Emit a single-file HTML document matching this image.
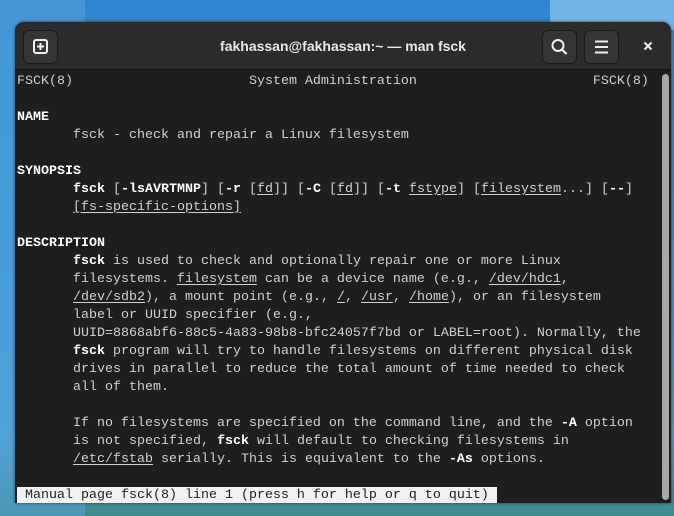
<!DOCTYPE html>
<html><head><meta charset="utf-8">
<style>
html,body{margin:0;padding:0;width:674px;height:516px;overflow:hidden;}
body{background:linear-gradient(180deg,#2f86cf 0%,#3d93d6 60%,#4a9ad2 85%,#3f8a8e 100%);position:relative;font-family:"Liberation Sans",sans-serif;}
.bgl{position:absolute;left:0;top:0;width:85px;height:516px;background:#5aa6dc;opacity:.5}
.bgr{position:absolute;left:550px;top:0;width:124px;height:30px;background:#6fb6e6}
.win{position:absolute;left:15px;top:22px;width:656px;height:481px;background:#1e1e1e;border-radius:9px 9px 0 0;overflow:hidden;box-shadow:0 0 3px rgba(0,0,0,.6)}
.hdr{position:absolute;left:0;top:0;width:656px;height:47px;background:#2b2b2b;border-bottom:1px solid #111}
.btn{position:absolute;top:8px;width:33px;height:32px;background:#353535;border-radius:6px;border:1px solid #1a1a1a}
.title{position:absolute;left:0;width:656px;top:16px;text-align:center;color:#e8e8e8;font-weight:bold;font-size:14px;}
.term{position:absolute;left:2px;top:51px;font-family:"Liberation Mono",monospace;font-size:13.33px;line-height:18px;color:#d0d0d0;white-space:pre;}
b{color:#fff}
u{text-decoration:underline;text-underline-offset:2px}
.status{background:#f2f2f2;color:#1e1e1e;display:inline-block;padding-right:8px}
.sb{position:absolute;left:647px;top:52px;width:7px;height:426px;background:#a8a8a8;border-radius:4px}
</style></head><body>
<div class="bgl"></div><div class="bgr"></div>
<div class="win">
 <div class="hdr">
  <div class="btn" style="left:8px"><svg width="33" height="32" viewBox="0 0 33 32"><rect x="10" y="9" width="13" height="13" rx="2" fill="none" stroke="#eee" stroke-width="2"/><path d="M16.5 12v7M13 15.5h7" stroke="#eee" stroke-width="2"/></svg></div>
  <div class="title">fakhassan@fakhassan:~ — man fsck</div>
  <div class="btn" style="left:527px"><svg width="33" height="32" viewBox="0 0 33 32"><circle cx="15" cy="14.5" r="5.5" fill="none" stroke="#eee" stroke-width="2"/><path d="M19 18.5l4.5 4.5" stroke="#eee" stroke-width="2.2"/></svg></div>
  <div class="btn" style="left:569px"><svg width="33" height="32" viewBox="0 0 33 32"><path d="M10 10.5h13M10 16h13M10 21.5h13" stroke="#eee" stroke-width="2"/></svg></div>
  <svg style="position:absolute;left:626px;top:17px" width="14" height="14" viewBox="0 0 14 14"><path d="M3.5 3.5l7 7M10.5 3.5l-7 7" stroke="#eee" stroke-width="2"/></svg>
 </div>
 <div class="term">FSCK(8)                      System Administration                      FSCK(8)

<b>NAME</b>
       fsck - check and repair a Linux filesystem

<b>SYNOPSIS</b>
       <b>fsck</b> [<b>-lsAVRTMNP</b>] [<b>-r</b> [<u>fd</u>]] [<b>-C</b> [<u>fd</u>]] [<b>-t</b> <u>fstype</u>] [<u>filesystem</u>...] [<b>--</b>]
       <u>[fs-specific-options]</u>

<b>DESCRIPTION</b>
       <b>fsck</b> is used to check and optionally repair one or more Linux
       filesystems. <u>filesystem</u> can be a device name (e.g., <u>/dev/hdc1</u>,
       <u>/dev/sdb2</u>), a mount point (e.g., <u>/</u>, <u>/usr</u>, <u>/home</u>), or an filesystem
       label or UUID specifier (e.g.,
       UUID=8868abf6-88c5-4a83-98b8-bfc24057f7bd or LABEL=root). Normally, the
       <b>fsck</b> program will try to handle filesystems on different physical disk
       drives in parallel to reduce the total amount of time needed to check
       all of them.

       If no filesystems are specified on the command line, and the <b>-A</b> option
       is not specified, <b>fsck</b> will default to checking filesystems in
       <u>/etc/fstab</u> serially. This is equivalent to the <b>-As</b> options.

<span class="status"> Manual page fsck(8) line 1 (press h for help or q to quit)</span></div>
 <div class="sb"></div>
</div>
</body></html>
